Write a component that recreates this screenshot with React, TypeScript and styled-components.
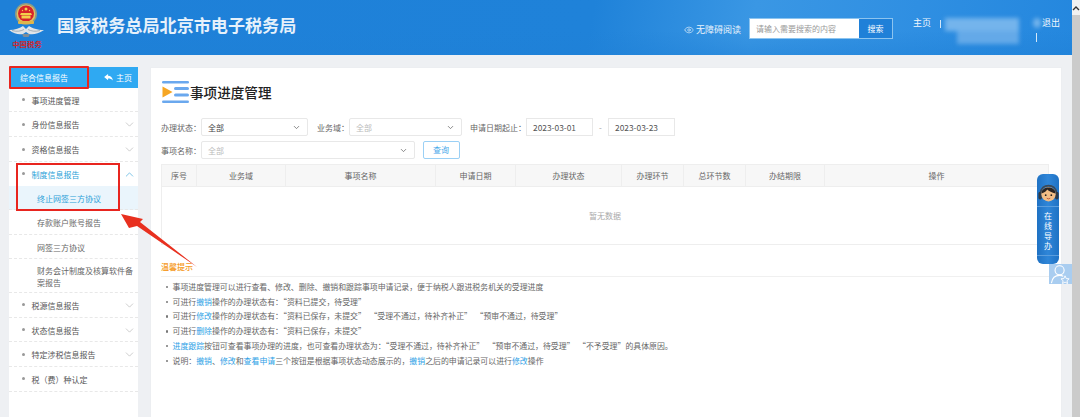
import React from "react";
import styled, { createGlobalStyle } from "styled-components";
import { ChevronDown, ChevronUp, Eye } from "lucide-react";

const GlobalStyle = createGlobalStyle`
  html, body {
    margin: 0;
    padding: 0;
    height: 100%;
    overflow: hidden;
    background: #eef0f3;
    font-family: "Noto Sans CJK SC", "Liberation Sans", sans-serif;
    color: #555;
  }
  * { box-sizing: border-box; }
`;

const menuItems = [
  { label: "事项进度管理", height: 24.3 },
  { label: "身份信息报告", height: 25, arrow: true },
  { label: "资格信息报告", height: 24.7, arrow: true },
];

const lowerItems = [
  { label: "税源信息报告", arrow: true },
  { label: "状态信息报告", arrow: true },
  { label: "特定涉税信息报告", arrow: true },
  { label: "税（费）种认定" },
];

const columns = [
  { label: "序号", width: 35 },
  { label: "业务域", width: 89 },
  { label: "事项名称", width: 150 },
  { label: "申请日期", width: 80 },
  { label: "办理状态", width: 106 },
  { label: "办理环节", width: 62 },
  { label: "总环节数", width: 62 },
  { label: "办结期限", width: 79 },
  { label: "操作", width: 223 },
];

const App = () => {
  return (
    <>
      <GlobalStyle />
      <Page>
        <Main>
          <Header>
            <HeaderLeft>
              <Emblem viewBox="0 0 36 47">
                <circle cx="17" cy="11" r="11" fill="#8d9a86" />
                <circle cx="17" cy="11" r="9.4" fill="#e2c25e" />
                <circle cx="17" cy="10.5" r="8" fill="#d6242b" />
                <circle cx="17" cy="6" r="1.5" fill="#f3d04c" />
                <circle cx="13.5" cy="7.5" r=".7" fill="#f3d04c" />
                <circle cx="20.5" cy="7.5" r=".7" fill="#f3d04c" />
                <path d="M12 10 H22 L23 12 H11 Z M12.5 12.5 H21.5 V15.5 H12.5 Z" fill="#f3d04c" />
                <rect x="9" y="18" width="16" height="3" rx="1" fill="#e0b64a" />
                <path d="M0 27 C6 27 11 25 14 23 L17 26 L20 23 C23 25 28 27 35 27 C29 31 24 32 20 31 L17 29 L14 31 C10 32 5 31 0 27 Z" fill="#dfe4e8" />
                <path d="M3 27.5 C8 29 12 28 15 26.5 M31 27.5 C26 29 22 28 19 26.5" stroke="#8b98a2" strokeWidth=".7" fill="none" />
                <path d="M13 31 H21 L19.5 34 H14.5 Z" fill="#7f8d97" />
                <text x="18" y="44" textAnchor="middle" fontSize="7.4" fontWeight="700" fill="#d0262c">中国税务</text>
              </Emblem>
              <SiteTitle>国家税务总局北京市电子税务局</SiteTitle>
            </HeaderLeft>
            <HeaderRight>
              <Accessible>
                <Eye size={10} strokeWidth={1.5} />
                无障碍阅读
              </Accessible>
              <SearchBox>
                <SearchInput>请输入需要搜索的内容</SearchInput>
                <SearchButton>搜索</SearchButton>
              </SearchBox>
              <HomeLink>主页</HomeLink>
              <Divider />
              <BlurredUser>
                <BlurTop>
                  <BlurLine />
                  <BlurBlob />
                </BlurTop>
                <BlurLineShort />
              </BlurredUser>
              <LogoutColumn>
                <span>退出</span>
                <LogoutBar />
              </LogoutColumn>
            </HeaderRight>
          </Header>

          <Body>
            <Sidebar>
              <SideHead>
                <SideTitle>综合信息报告</SideTitle>
                <SideHome>
                  <svg width="9" height="7" viewBox="0 0 10 8">
                    <path d="M0 3.5 L4.5 0 V2 C7.5 2 9.5 4 10 7.5 C8.5 5.5 7 5 4.5 5 V7 Z" fill="#fff" />
                  </svg>
                  主页
                </SideHome>
              </SideHead>
              {menuItems.map((m) => (
                <MenuRow key={m.label} $h={m.height}>
                  <Dot />
                  <MenuLabel>{m.label}</MenuLabel>
                  {m.arrow && <ChevronDown size={13} strokeWidth={0.9} color="#999" />}
                </MenuRow>
              ))}
              <MenuRow $h={24} $open>
                <Dot />
                <MenuLabel>制度信息报告</MenuLabel>
                <ChevronUp size={13} strokeWidth={1.1} color="#2a9fd8" />
              </MenuRow>
              <SubRow $active>终止网签三方协议</SubRow>
              <SubRow>存款账户账号报告</SubRow>
              <SubRow>网签三方协议</SubRow>
              <SubRowTall>财务会计制度及核算软件备案报告</SubRowTall>
              {lowerItems.map((m) => (
                <MenuRow key={m.label} $h={24.6}>
                  <Dot />
                  <MenuLabel>{m.label}</MenuLabel>
                  {m.arrow && <ChevronDown size={13} strokeWidth={0.9} color="#999" />}
                </MenuRow>
              ))}
            </Sidebar>

            <Panel>
              <TitleRow>
                <svg width="27" height="22" viewBox="0 0 27 22">
                  <rect x="0" y="0" width="27" height="2.6" rx="1.3" fill="#6aa8ee" />
                  <rect x="12" y="6" width="15" height="3" rx="1.5" fill="#6aa8ee" />
                  <rect x="12" y="12.5" width="15" height="3" rx="1.5" fill="#6aa8ee" />
                  <rect x="0" y="19.4" width="27" height="2.6" rx="1.3" fill="#6aa8ee" />
                  <path d="M0.5 5.5 L10.5 11 L0.5 16.5 Z" fill="#f6a623" />
                </svg>
                <PanelTitle>事项进度管理</PanelTitle>
              </TitleRow>

              <FilterRow>
                <FieldLabel $w={40}>办理状态：</FieldLabel>
                <SelectBox $w={107}>
                  <SelectValue>全部</SelectValue>
                  <ChevronDown size={9} color="#666" />
                </SelectBox>
                <FieldLabel $w={32} $gap={9}>业务域：</FieldLabel>
                <SelectBox $w={112.5}>
                  <SelectValue $muted>全部</SelectValue>
                  <ChevronDown size={9} color="#666" />
                </SelectBox>
                <FieldLabel $w={56} $gap={8.5}>申请日期起止：</FieldLabel>
                <DateBox>2023-03-01</DateBox>
                <DateDash>-</DateDash>
                <DateBox>2023-03-23</DateBox>
              </FilterRow>

              <FilterRow>
                <FieldLabel $w={40}>事项名称：</FieldLabel>
                <SelectBox $w={214}>
                  <SelectValue $muted>全部</SelectValue>
                  <ChevronDown size={9} color="#666" />
                </SelectBox>
                <QueryButton>查询</QueryButton>
              </FilterRow>

              <Table>
                <TableHead>
                  {columns.map((c) => (
                    <HeadCell key={c.label} $w={c.width}>{c.label}</HeadCell>
                  ))}
                </TableHead>
                <EmptyRow>暂无数据</EmptyRow>
              </Table>

              <TipTitle>温馨提示</TipTitle>
              <TipList>
                <li>事项进度管理可以进行查看、修改、删除、撤销和跟踪事项申请记录，便于纳税人跟进税务机关的受理进度</li>
                <li>可进行<Hl>撤销</Hl>操作的办理状态有：“资料已提交，待受理”</li>
                <li>可进行<Hl>修改</Hl>操作的办理状态有：“资料已保存，未提交”&nbsp;&nbsp;“受理不通过，待补齐补正”&nbsp;&nbsp;“预审不通过，待受理”</li>
                <li>可进行<Hl>删除</Hl>操作的办理状态有：“资料已保存，未提交”</li>
                <li><Hl>进度跟踪</Hl>按钮可查看事项办理的进度，也可查看办理状态为：“受理不通过，待补齐补正”&nbsp;&nbsp;“预审不通过，待受理”&nbsp;&nbsp;“不予受理”的具体原因。</li>
                <li>说明：<Hl>撤销</Hl>、<Hl>修改</Hl>和<Hl>查看申请</Hl>三个按钮是根据事项状态动态展示的，<Hl>撤销</Hl>之后的申请记录可以进行<Hl>修改</Hl>操作</li>
              </TipList>
            </Panel>
          </Body>
        </Main>
        <Scrollbar>
          <ScrollButton>
            <svg width="8" height="6" viewBox="0 0 8 6">
              <path d="M1 5 L4 2 L7 5" stroke="#333" strokeWidth="1.4" fill="none" />
            </svg>
          </ScrollButton>
        </Scrollbar>

        <Annotations viewBox="0 0 1080 417">
          <path d="M197 267 L137 226 L129 228 L121 214 L143 219 L140 222 Z" fill="#e8301f" />
        </Annotations>

        <RedBoxTop />
        <RedBoxMenu />

        <HelpTab>
          <svg viewBox="0 0 24 24">
            <path d="M3 13 C3 1 21 1 21 13" fill="none" stroke="#3c4a58" strokeWidth="2" />
            <rect x="0.5" y="11" width="4" height="9" rx="2" fill="#2d3a48" />
            <rect x="19.5" y="11" width="4" height="9" rx="2" fill="#2d3a48" />
            <circle cx="12" cy="14" r="8.2" fill="#f2bd85" />
            <path d="M4 13 C4 4 20 4 20 13 C16 12 12.5 10.5 10.5 8.5 C9 11 7 12 4 13 Z" fill="#2a2523" />
            <circle cx="8.8" cy="15" r="1" fill="#222" />
            <circle cx="15.2" cy="15" r="1" fill="#222" />
            <path d="M10 18.5 Q12 20 14 18.5" stroke="#b5523c" fill="none" />
          </svg>
          <HelpRule />
          <HelpText>在<br />线<br />导<br />办</HelpText>
          <HelpRule />
        </HelpTab>
        <UserBadge>
          <svg width="21" height="20" viewBox="0 0 22 22">
            <circle cx="10" cy="7" r="5" fill="none" stroke="#fff" strokeWidth="1.2" />
            <path d="M1 21 C2 14 6 12.5 10 12.5 C11.5 12.5 13 12.8 14 13.5" fill="none" stroke="#fff" strokeWidth="1.2" />
            <path d="M16 13 L17.3 16 L20.5 16.3 L18.1 18.4 L18.8 21.5 L16 19.9 L13.2 21.5 L13.9 18.4 L11.5 16.3 L14.7 16 Z" fill="none" stroke="#fff" strokeWidth="1" />
          </svg>
        </UserBadge>
      </Page>
    </>
  );
};

const Page = styled.div`
  position: relative;
  width: 1080px;
  height: 417px;
  display: flex;
  overflow: hidden;
`;

const Main = styled.div`
  width: 1072px;
  display: flex;
  flex-direction: column;
`;

const Scrollbar = styled.div`
  width: 8px;
  background: #cbcbcb;
`;

const ScrollButton = styled.div`
  height: 15px;
  display: flex;
  justify-content: center;
  padding-top: 5px;
  background: #f1f1f1;
`;

const Header = styled.header`
  height: 55px;
  flex: none;
  display: flex;
  justify-content: space-between;
  padding: 0 12px 0 9px;
  background:
    linear-gradient(180deg, rgba(31, 128, 214, 0) 55%, rgba(31, 128, 214, 0.45) 100%),
    linear-gradient(100deg, #1e80d8 0%, #1f82d9 55%, #3a97e4 70%, #2f8fe2 85%, #2487de 100%);
`;

const HeaderLeft = styled.div`
  display: flex;
  align-items: flex-start;
  gap: 12px;
`;

const Emblem = styled.svg`
  width: 36px;
  height: 47px;
  margin-top: 3px;
`;

const SiteTitle = styled.h1`
  margin: 15px 0 0;
  font-size: 17.1px;
  line-height: 20px;
  font-weight: 700;
  color: #e6f1fb;
  white-space: nowrap;
`;

const HeaderRight = styled.div`
  display: flex;
  align-items: flex-start;
  color: #fff;
  font-size: 9px;
`;

const Accessible = styled.div`
  display: flex;
  align-items: center;
  gap: 2px;
  margin-top: 23px;
  line-height: 14px;
  color: #e8f3fc;
`;

const SearchBox = styled.div`
  display: flex;
  width: 144px;
  height: 21px;
  margin: 18px 0 0 8px;
  background: #fff;
  border: 1px solid #8cc4ef;
`;

const SearchInput = styled.div`
  flex: 1;
  padding-left: 6px;
  font-size: 8px;
  line-height: 19px;
  color: #999;
`;

const SearchButton = styled.div`
  width: 33px;
  background: #1f80d8;
  color: #fff;
  font-size: 8px;
  line-height: 19px;
  text-align: center;
`;

const HomeLink = styled.div`
  margin: 15px 0 0 20px;
  line-height: 16px;
  color: #f0f7fd;
`;

const Divider = styled.div`
  width: 1px;
  height: 8px;
  margin: 20px 0 0 9px;
  background: #d5e8f8;
`;

const BlurredUser = styled.div`
  width: 96px;
  margin: 18px 0 0 4px;
  filter: blur(2px);
`;

const BlurTop = styled.div`
  display: flex;
  justify-content: space-between;
`;

const BlurLine = styled.div`
  width: 74px;
  height: 13px;
  background: #74b4ec;
`;

const BlurBlob = styled.div`
  width: 8px;
  height: 10px;
  background: #74b4ec;
  border-radius: 50%;
`;

const BlurLineShort = styled.div`
  width: 62px;
  height: 13px;
  margin-left: 12px;
  background: #64a9e8;
`;

const LogoutColumn = styled.div`
  position: relative;
  margin: 15px 0 0 1px;
  line-height: 16px;
  color: #f0f7fd;
`;

const LogoutBar = styled.div`
  position: absolute;
  left: -6px;
  top: 18px;
  width: 1px;
  height: 9px;
  background: #d5e8f8;
`;

const Body = styled.div`
  flex: 1;
  display: flex;
  gap: 12px;
  padding: 12px 10px 0 9px;
  min-height: 0;
`;

const Sidebar = styled.aside`
  width: 129px;
  flex: none;
  background: #fff;
  border-radius: 2px 2px 0 0;
`;

const SideHead = styled.div`
  height: 21px;
  display: flex;
  background: #2fa9f2;
  color: #fff;
  font-size: 8px;
  line-height: 21px;
`;

const SideTitle = styled.div`
  width: 80px;
  padding-left: 11px;
`;

const SideHome = styled.div`
  flex: 1;
  display: flex;
  align-items: center;
  gap: 3px;
  padding-left: 15px;
`;

const MenuRow = styled.div<{ $h: number; $open?: boolean }>`
  height: ${(p) => p.$h}px;
  display: flex;
  align-items: center;
  padding: 1px 2px 0 22.5px;
  position: relative;
  font-size: 8px;
  color: ${(p) => (p.$open ? "#2a9fd8" : "#555")};
  border-bottom: ${(p) => (p.$open ? "none" : "1px dashed #e8e8e8")};
`;

const Dot = styled.i`
  position: absolute;
  left: 13px;
  top: calc(50% - 1.5px);
  width: 3px;
  height: 3px;
  border-radius: 50%;
  background: #999;
`;

const MenuLabel = styled.span`
  flex: 1;
  white-space: nowrap;
`;

const SubRow = styled.div<{ $active?: boolean }>`
  height: 24.4px;
  padding: 1px 0 0 28px;
  font-size: 8px;
  line-height: 23px;
  color: ${(p) => (p.$active ? "#2a9fd8" : "#666")};
  background: ${(p) => (p.$active ? "#eaf5fc" : "#fff")};
  border-bottom: 1px dashed #e8e8e8;
`;

const SubRowTall = styled.div`
  height: 34px;
  padding: 6px 4px 0 28px;
  font-size: 8px;
  line-height: 12px;
  color: #666;
  border-bottom: 1px dashed #e8e8e8;
`;

const Panel = styled.main`
  width: 912px;
  flex: none;
  background: #fff;
  padding: 9px 10px 0 10px;
  border: 1px solid #eceef1;
  border-bottom: none;
`;

const TitleRow = styled.div`
  height: 30px;
  display: flex;
  align-items: center;
  gap: 1px;
  margin-bottom: 11px;
  padding-left: 1px;
`;

const PanelTitle = styled.h2`
  margin: 0;
  font-size: 13.6px;
  line-height: 20px;
  font-weight: 500;
  color: #222;
`;

const FilterRow = styled.div`
  display: flex;
  align-items: center;
  height: 18px;
  margin-bottom: 5px;
`;

const FieldLabel = styled.span<{ $w: number; $gap?: number }>`
  flex: none;
  width: ${(p) => p.$w}px;
  margin-left: ${(p) => p.$gap ?? 0}px;
  font-size: 8px;
  color: #666;
  white-space: nowrap;
`;

const SelectBox = styled.div<{ $w: number }>`
  flex: none;
  width: ${(p) => p.$w}px;
  height: 18px;
  display: flex;
  align-items: center;
  justify-content: space-between;
  padding: 0 6px;
  border: 1px solid #e8e8e8;
  border-radius: 2px;
`;

const SelectValue = styled.span<{ $muted?: boolean }>`
  font-size: 8px;
  color: ${(p) => (p.$muted ? "#bbb" : "#444")};
`;

const DateBox = styled.div`
  width: 67px;
  height: 18px;
  padding-left: 6px;
  border: 1px solid #e8e8e8;
  font-size: 8.4px;
  line-height: 16px;
  color: #555;
`;

const DateDash = styled.span`
  width: 15px;
  text-align: center;
  font-size: 8px;
  color: #999;
`;

const QueryButton = styled.div`
  width: 37px;
  height: 18px;
  margin-left: 7.5px;
  border: 1px solid #9bd0f5;
  border-radius: 2px;
  font-size: 8px;
  line-height: 16px;
  text-align: center;
  color: #45a7ea;
`;

const Table = styled.div`
  width: 888px;
  border: 1px solid #eeeeee;
`;

const TableHead = styled.div`
  display: flex;
  height: 22px;
  background: #f7f7f7;
  border-bottom: 1px solid #eeeeee;
`;

const HeadCell = styled.div<{ $w: number }>`
  width: ${(p) => p.$w}px;
  flex: none;
  font-size: 8px;
  line-height: 21px;
  text-align: center;
  color: #666;
  border-right: 1px solid #eeeeee;
  &:last-child { border-right: none; }
`;

const EmptyRow = styled.div`
  height: 57px;
  font-size: 8px;
  line-height: 57px;
  text-align: center;
  color: #aaa;
`;

const TipTitle = styled.div`
  margin-top: 14px;
  padding-bottom: 3px;
  height: 18px;
  font-size: 8px;
  line-height: 15px;
  font-weight: 500;
  color: #f59a23;
  border-bottom: 1px solid #f0f0f0;
`;

const TipList = styled.ul`
  margin: 3px 0 0;
  padding: 0 0 0 11.5px;
  list-style: none;
  font-size: 7.9px;
  line-height: 14.7px;
  color: #666;
  li {
    position: relative;
    white-space: nowrap;
  }
  li::before {
    content: "";
    position: absolute;
    left: -7px;
    top: 6px;
    width: 2.4px;
    height: 2.4px;
    border-radius: 50%;
    background: #777;
  }
`;

const Hl = styled.span`
  color: #2e9fe6;
`;

const Annotations = styled.svg`
  position: absolute;
  left: 0;
  top: 0;
  width: 1080px;
  height: 417px;
  pointer-events: none;
`;

const RedBoxTop = styled.div`
  position: absolute;
  left: 9px;
  top: 66px;
  width: 79.5px;
  height: 22.5px;
  border: 2px solid #e8251f;
  border-radius: 1px;
`;

const RedBoxMenu = styled.div`
  position: absolute;
  left: 16px;
  top: 163px;
  width: 104px;
  height: 48px;
  border: 2px solid #e8251f;
`;

const HelpTab = styled.div`
  position: absolute;
  left: 1037px;
  top: 174px;
  width: 22px;
  height: 90px;
  display: flex;
  flex-direction: column;
  align-items: center;
  padding-top: 8px;
  border-radius: 6px;
  background: linear-gradient(90deg, #1f72c4, #2f86d8 50%, #1f72c4);
  svg { width: 21px; height: 21px; margin-bottom: 3px; flex: none; }
`;

const HelpRule = styled.div`
  width: 100%;
  height: 1px;
  flex: none;
  background: #5a9ddd;
`;

const HelpText = styled.div`
  height: 48px;
  padding-top: 4px;
  font-size: 8px;
  line-height: 10px;
  text-align: center;
  color: #fff;
`;

const UserBadge = styled.div`
  position: absolute;
  left: 1049px;
  top: 264px;
  width: 23px;
  height: 20px;
  display: flex;
  align-items: center;
  justify-content: center;
  background: #a9cdf0;
`;

export default App;
